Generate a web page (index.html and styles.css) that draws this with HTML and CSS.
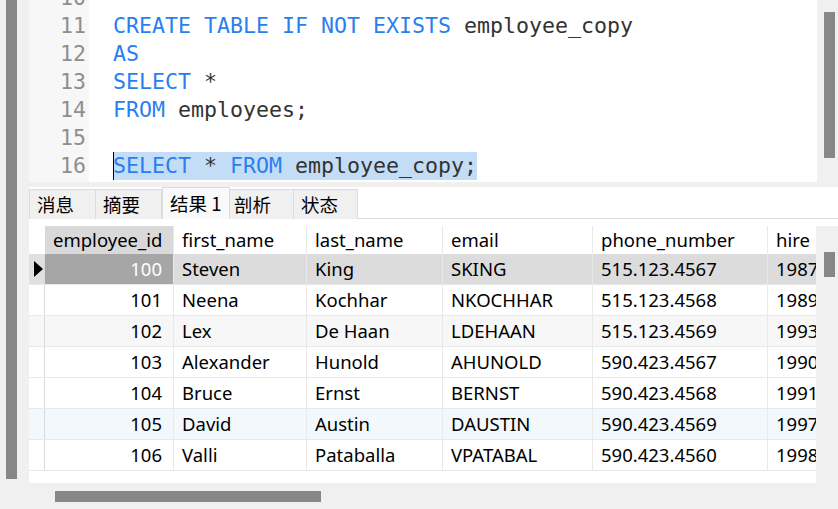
FILE: index.html
```html
<!DOCTYPE html>
<html lang="zh-CN">
<head>
<meta charset="utf-8">
<title>Query</title>
<link rel="stylesheet" href="styles.css">
</head>
<body>
<div class="app">
  <div class="side"></div>
  <div class="main">
    <div class="editor">
      <div class="gutter">
        <div class="lines">
          <div class="ln">10</div>
          <div class="ln">11</div>
          <div class="ln">12</div>
          <div class="ln">13</div>
          <div class="ln">14</div>
          <div class="ln">15</div>
          <div class="ln">16</div>
          <div class="ln">17</div>
        </div>
      </div>
      <div class="code">
        <div class="lines">
          <div class="cl"></div>
          <div class="cl"><span class="kw">CREATE TABLE IF NOT EXISTS</span> employee_copy</div>
          <div class="cl"><span class="kw">AS</span></div>
          <div class="cl"><span class="kw">SELECT</span> *</div>
          <div class="cl"><span class="kw">FROM</span> employees;</div>
          <div class="cl"></div>
          <div class="cl"><span class="sel"><span class="kw">SELECT</span> * <span class="kw">FROM</span> employee_copy;</span></div>
          <div class="cl"></div>
        </div>
      </div>
      <div class="vscroll"><div class="vthumb"></div></div>
    </div>

    <div class="results">
      <div class="tabs">
        <div class="tab">消息</div>
        <div class="tab">摘要</div>
        <div class="tab active">结果 1</div>
        <div class="tab">剖析</div>
        <div class="tab">状态</div>
      </div>
      <div class="gridwrap">
        <div class="grid">
          <div class="row head">
            <div class="c ind"></div>
            <div class="c sortcol">employee_id</div>
            <div class="c">first_name</div>
            <div class="c">last_name</div>
            <div class="c">email</div>
            <div class="c">phone_number</div>
            <div class="c">hire</div>
          </div>
          <div class="row cur">
            <div class="c ind"><span class="tri"></span></div>
            <div class="c num selcell">100</div>
            <div class="c">Steven</div>
            <div class="c">King</div>
            <div class="c">SKING</div>
            <div class="c">515.123.4567</div>
            <div class="c">1987-06-17</div>
          </div>
          <div class="row">
            <div class="c ind"></div>
            <div class="c num">101</div>
            <div class="c">Neena</div>
            <div class="c">Kochhar</div>
            <div class="c">NKOCHHAR</div>
            <div class="c">515.123.4568</div>
            <div class="c">1989-09-21</div>
          </div>
          <div class="row alt">
            <div class="c ind"></div>
            <div class="c num">102</div>
            <div class="c">Lex</div>
            <div class="c">De Haan</div>
            <div class="c">LDEHAAN</div>
            <div class="c">515.123.4569</div>
            <div class="c">1993-01-13</div>
          </div>
          <div class="row">
            <div class="c ind"></div>
            <div class="c num">103</div>
            <div class="c">Alexander</div>
            <div class="c">Hunold</div>
            <div class="c">AHUNOLD</div>
            <div class="c">590.423.4567</div>
            <div class="c">1990-01-03</div>
          </div>
          <div class="row">
            <div class="c ind"></div>
            <div class="c num">104</div>
            <div class="c">Bruce</div>
            <div class="c">Ernst</div>
            <div class="c">BERNST</div>
            <div class="c">590.423.4568</div>
            <div class="c">1991-05-21</div>
          </div>
          <div class="row hover">
            <div class="c ind"></div>
            <div class="c num">105</div>
            <div class="c">David</div>
            <div class="c">Austin</div>
            <div class="c">DAUSTIN</div>
            <div class="c">590.423.4569</div>
            <div class="c">1997-06-25</div>
          </div>
          <div class="row">
            <div class="c ind"></div>
            <div class="c num">106</div>
            <div class="c">Valli</div>
            <div class="c">Pataballa</div>
            <div class="c">VPATABAL</div>
            <div class="c">590.423.4560</div>
            <div class="c">1998-02-05</div>
          </div>
        </div>
        <div class="gscroll"><div class="gthumb"></div></div>
      </div>
    </div>
    <div class="hscroll"><div class="hthumb"></div></div>
  </div>
</div>
</body>
</html>
```

FILE: styles.css
```css
html, body {
  margin: 0;
  padding: 0;
}
body {
  background: #f0f0f0;
  width: 838px;
  height: 509px;
  overflow: hidden;
}
.app {
  display: flex;
  padding-left: 6px;
  height: 509px;
}
.side {
  width: 11px;
  height: 479px;
  background: #878787;
  flex: none;
}
.main {
  margin-left: 12px;
  width: 809px;
  display: flex;
  flex-direction: column;
}

/* editor */
.editor {
  display: flex;
  height: 182px;
  overflow: hidden;
  flex: none;
  font-family: "DejaVu Sans Mono", monospace;
  font-size: 21.6px;
}
.lines {
  margin-top: -16px;
}
.gutter {
  width: 60px;
  background: #f7f7f7;
  flex: none;
}
.ln {
  height: 28px;
  line-height: 28px;
  text-align: right;
  padding-right: 3px;
  color: #8e8e8e;
}
.code {
  width: 704px;
  padding-left: 24px;
  background: #ffffff;
  flex: none;
  color: #333333;
}
.cl {
  height: 28px;
  line-height: 28px;
  white-space: pre;
}
.cl:nth-child(7) {
  margin-top: -1px;
  line-height: 30px;
}
.kw {
  color: #2a7ff0;
}
.sel {
  display: inline-block;
  height: 28px;
  line-height: 28px;
  vertical-align: top;
  margin-top: 1px;
  background: #c3ddf6;
  box-shadow: inset 1px 0 0 #000;
}
.vscroll {
  width: 21px;
  background: #f0f0f0;
  flex: none;
}
.vthumb {
  margin: 12px 0 0 7px;
  width: 11px;
  height: 146px;
  background: #878787;
}

/* results */
.results {
  margin-top: 5px;
  height: 296px;
  background: #ffffff;
  display: flex;
  flex-direction: column;
  flex: none;
}
.tabs {
  height: 31px;
  border-bottom: 1px solid #dedede;
  display: flex;
  align-items: flex-end;
  font-family: "Noto Sans CJK SC", "Noto Sans", sans-serif;
  font-size: 18.5px;
  color: #000;
  flex: none;
}
.tab {
  box-sizing: border-box;
  height: 30px;
  margin-bottom: -1px;
  padding: 0 7px;
  line-height: 28px;
  background: #f0f0f0;
  border: 1px solid #dcdcdc;
  border-bottom: none;
  width: 66px;
  overflow: hidden;
  white-space: nowrap;
}
.tab + .tab {
  border-left: none;
}
.tab:first-child {
  width: 67px;
}
.tab.active {
  height: 32px;
  background: #f9f9f9;
  width: 68px;
  padding-left: 7px;
  line-height: 30px;
  border-left: 1px solid #dcdcdc;
  position: relative;
}
.tab:nth-child(4) {
  width: 64px;
  border-left: none;
  padding-left: 4px;
}
.tab:nth-child(5) {
  width: 64px;
}

.gridwrap {
  display: flex;
  padding-top: 7px;
  flex: 1;
}
.grid {
  width: 787px;
  flex: none;
  font-family: "Noto Sans", "Noto Sans CJK SC", sans-serif;
  font-size: 18.5px;
  color: #000;
}
.row {
  display: grid;
  grid-template-columns: 16px 129px 133px 136px 150px 175px 48px;
  height: 31px;
  box-sizing: border-box;
  border-bottom: 1px solid #e9e9e9;
}
.row.head {
  height: 28px;
  border-bottom: none;
}
.c {
  box-sizing: border-box;
  padding-left: 8px;
  white-space: nowrap;
  overflow: hidden;
  line-height: 30px;
  border-right: 1px solid #e9e9e9;
}
.c:last-child {
  border-right: none;
}
.head .c {
  line-height: 28px;
}
.c.ind {
  padding: 0;
  border-right: 1px solid #dadada;
  position: relative;
}
.head .c.ind {
  border-right: none;
}
.c.num {
  text-align: right;
  padding-left: 0;
  padding-right: 11px;
}
.sortcol {
  background: #d9d9d9;
}
.row.cur {
  background: #dcdcdc;
}
.row.cur .c.ind {
  background: #e0e0e0;
}
.selcell {
  background: #a6a6a6;
  color: #ffffff;
}
.row.alt {
  background: #f7f7f7;
}
.row.hover {
  background: #f3f8fc;
}
.tri {
  position: absolute;
  left: 5px;
  top: 7px;
  width: 0;
  height: 0;
  border-top: 8px solid transparent;
  border-bottom: 8px solid transparent;
  border-left: 9px solid #000;
}
.gscroll {
  width: 22px;
  background: #f0f0f0;
  flex: none;
}
.gthumb {
  margin: 26px 0 0 8px;
  width: 11px;
  height: 25px;
  background: #878787;
}
.hscroll {
  height: 26px;
  flex: none;
}
.hthumb {
  margin: 8px 0 0 26px;
  width: 266px;
  height: 11px;
  background: #878787;
}
```
